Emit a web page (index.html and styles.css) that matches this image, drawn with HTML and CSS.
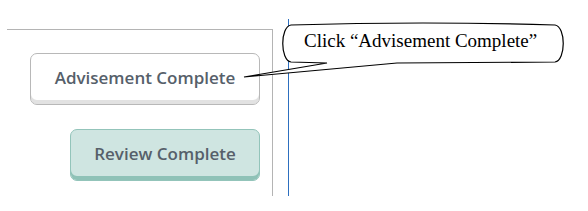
FILE: index.html
```html
<!DOCTYPE html>
<html>
<head>
<meta charset="utf-8">
<link rel="stylesheet" href="styles.css">
</head>
<body>
<div class="stage">
  <div class="frame">
    <button class="btn btn-plain">Advisement Complete</button>
    <button class="btn btn-teal">Review Complete</button>
  </div>
  <div class="guide"></div>
  <div class="callout">
    <svg class="callout-shape" width="588" height="211" viewBox="0 0 588 211">
      <path d="M291 25 Q423 21 555 25 C566 27 566 60 555 62 L397 63 L244 77 L327 63 L291 62 C280 60 280 27 291 25 Z" fill="#fff" stroke="#000" stroke-width="1.2" stroke-linejoin="miter"/>
    </svg>
    <div class="callout-text">Click “Advisement Complete”</div>
  </div>
</div>
</body>
</html>
```
FILE: styles.css
```css
html, body {
  margin: 0;
  padding: 0;
  background: #fff;
}
.stage {
  position: relative;
  width: 588px;
  height: 211px;
  display: flex;
  align-items: flex-start;
  padding-left: 7px;
  box-sizing: border-box;
}
.frame {
  margin-top: 29px;
  width: 266px;
  height: 167px;
  border-top: 1px solid #b4b4b4;
  border-right: 1px solid #b4b4b4;
  box-sizing: border-box;
  display: flex;
  flex-direction: column;
  align-items: flex-end;
  padding-top: 23px;
  padding-right: 12px;
  gap: 24px;
}
.guide {
  margin-top: 19px;
  margin-left: 15px;
  width: 1px;
  height: 177px;
  background: #2d6fbf;
}
.btn {
  height: 52px;
  border-radius: 7px;
  font-family: "Open Sans", sans-serif;
  font-weight: 600;
  font-size: 17px;
  color: #56606a;
  padding: 0 0 4px 0;
  box-sizing: border-box;
  cursor: pointer;
}
.btn-plain {
  width: 230px;
  background: #fff;
  border: 1px solid #b8b8b8;
  box-shadow: inset 0 -4px 0 #e2e2e2;
}
.btn-teal {
  width: 190px;
  background: #cfe5e1;
  border: 1px solid #93c4ba;
  box-shadow: inset 0 -4px 0 #8fc2b7;
}
.callout {
  position: absolute;
  left: 0;
  top: 0;
  width: 588px;
  height: 211px;
  pointer-events: none;
}
.callout-shape {
  position: absolute;
  left: 0;
  top: 0;
}
.callout-text {
  position: absolute;
  left: 304px;
  top: 31px;
  font-family: "Liberation Serif", "Times New Roman", serif;
  font-size: 19px;
  line-height: 20px;
  color: #000;
  white-space: nowrap;
}
```
